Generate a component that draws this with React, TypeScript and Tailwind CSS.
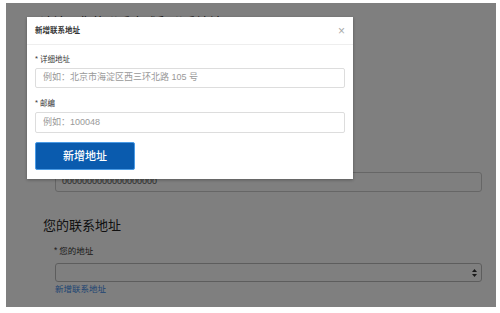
import React from "react";

const font = { fontFamily: '"Liberation Sans", "Noto Sans CJK SC", sans-serif' };

const Label: React.FC<{ text: string; size: string }> = ({ text, size }) => (
    <div className={`flex items-start gap-[2px] ${size} text-[#333]`}>
        <span className="leading-[8px] text-[#333]">*</span>
        <span>{text}</span>
    </div>
);

const App: React.FC = () => {
    return (
        <div className="w-[500px] h-[313px] bg-white pt-[3px] pl-[6px]" style={font}>
            <div className="relative w-[490px] h-[304px] bg-white overflow-hidden">
                {/* page behind the dialog; its first heading sits just under the dialog's top edge */}
                <div className="flex flex-col">
                    <h1 className="ml-[34px] mt-[13px] text-[13px] leading-[14px] text-[#222]">
                        请填写您的联系方式和联系地址
                    </h1>
                    <div className="ml-[49px] mt-[142px] w-[427px] h-[20px] border border-[#ccc] rounded-[3px] px-[6px] flex items-center text-[9px] text-[#555]">
                        0000000000000000000
                    </div>
                    <h2 className="ml-[37px] mt-[27px] text-[13px] leading-[13px] text-[#222]">您的联系地址</h2>
                    <div className="ml-[48px] mt-[14px] h-[10px] leading-[10px]">
                        <Label text="您的地址" size="text-[8.5px]" />
                    </div>
                    <div className="ml-[49px] mt-[7px] w-[427px] h-[19px] border border-[#bbb] rounded-[3px] flex items-center justify-end pr-[4px]">
                        <svg width="5" height="8" viewBox="0 0 5 8">
                            <path d="M2.5 0 L5 3 L0 3 Z" fill="#333" />
                            <path d="M2.5 8 L5 5 L0 5 Z" fill="#333" />
                        </svg>
                    </div>
                    <a className="ml-[49px] mt-[2px] text-[8.5px] leading-[10px] text-[#3d8ae6]">新增联系地址</a>
                </div>

                {/* backdrop */}
                <div className="absolute inset-0 bg-black/50" />

                {/* dialog */}
                <div className="absolute left-[21px] top-[14px] w-[326px] h-[162px] bg-white shadow-[0_1px_3px_rgba(0,0,0,0.3)] flex flex-col">
                    <div className="h-[28px] border-b border-[#eee] flex items-center justify-between pl-[8px] pr-[8px]">
                        <span className="text-[7.5px] font-bold text-[#333]">新增联系地址</span>
                        <span className="text-[12px] leading-none text-[#aaa]">×</span>
                    </div>
                    <div className="flex flex-col px-[8px] pt-[10px]">
                        <div className="h-[9px] leading-[9px]">
                            <Label text="详细地址" size="text-[7.5px]" />
                        </div>
                        <div className="mt-[4px] h-[20px] border border-[#ddd] rounded-[2px] flex items-center px-[7px] text-[9px] text-[#999]">
                            例如：北京市海淀区西三环北路 105 号
                        </div>
                        <div className="mt-[11px] h-[9px] leading-[9px]">
                            <Label text="邮编" size="text-[7.5px]" />
                        </div>
                        <div className="mt-[4px] h-[21px] border border-[#ddd] rounded-[2px] flex items-center px-[7px] text-[9px] text-[#999]">
                            例如：100048
                        </div>
                        <button className="mt-[9px] w-[100px] h-[28px] bg-[#0a5bae] border border-[#4a9be6] rounded-[2px] text-white text-[11px] font-medium">
                            新增地址
                        </button>
                    </div>
                </div>
            </div>
        </div>
    );
};

export default App;
